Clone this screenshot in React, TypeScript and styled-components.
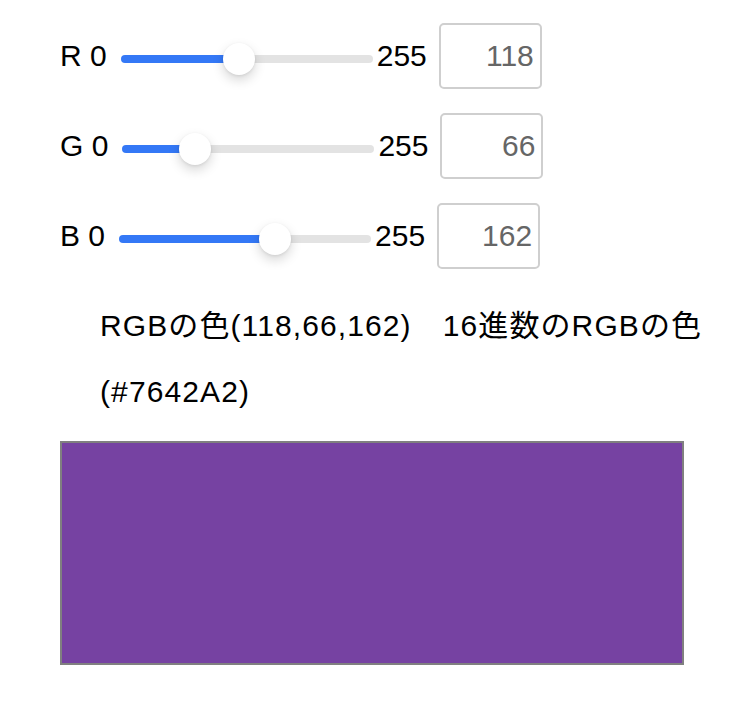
import { useState } from 'react'
import styled, { createGlobalStyle } from 'styled-components'

const GlobalStyle = createGlobalStyle`
  body {
    margin: 0;
    background: #ffffff;
    font-family: "Liberation Sans", "Noto Sans CJK JP", sans-serif;
    color: #000000;
  }
`;

const TRACK_WIDTH = 252
const THUMB = 32

const Page = styled.div`
  padding: 23px 0 0 60px;
`;

const Sliders = styled.div`
  display: flex;
  flex-direction: column;
  gap: 24px;
`;

const Row = styled.div`
  display: flex;
  align-items: center;
  height: 66px;
`;

const Label = styled.span`
  font-size: 30px;
  line-height: 1;
`;

const Range = styled.input`
  -webkit-appearance: none;
  appearance: none;
  width: ${TRACK_WIDTH}px;
  height: ${THUMB}px;
  margin: 6px 4px 0 14px;
  padding: 0;
  background: transparent;
  outline: none;

  &::-webkit-slider-runnable-track {
    height: 8px;
    border-radius: 4px;
    background: linear-gradient(
      to right,
      #3478f6 0,
      #3478f6 var(--fill),
      #e3e3e3 var(--fill),
      #e3e3e3 100%
    );
  }

  &::-webkit-slider-thumb {
    -webkit-appearance: none;
    width: ${THUMB}px;
    height: ${THUMB}px;
    margin-top: -12px;
    border-radius: 50%;
    background: #ffffff;
    box-shadow: 0 5px 12px rgba(0, 0, 0, 0.16), 0 1px 3px rgba(0, 0, 0, 0.08);
  }
`;

const ValueBox = styled.input`
  box-sizing: border-box;
  width: 103px;
  height: 66px;
  margin-left: 12px;
  padding: 0 6px 0 0;
  border: 2px solid #cfcfcf;
  border-radius: 5px;
  font-family: "Liberation Sans", sans-serif;
  font-size: 30px;
  color: #666666;
  text-align: right;
  outline: none;
`;

const Readout = styled.p`
  margin: 24px 0 0;
  padding-left: 40px;
  max-width: 650px;
  font-size: 30px;
  line-height: 66px;
  letter-spacing: 1.1px;
`;

const Swatch = styled.div`
  width: 624px;
  height: 224px;
  margin-top: 16px;
  box-sizing: border-box;
  border: 2px solid #808080;
`;

const hex = (n: number) => n.toString(16).toUpperCase().padStart(2, '0')

const Channel = ({ name, value, onChange }: { name: string; value: number; onChange: (v: number) => void }) => {
  const fill = THUMB / 2 + (value / 255) * (TRACK_WIDTH - THUMB)
  return (
    <Row>
      <Label>{name} 0</Label>
      <Range
        type="range"
        min={0}
        max={255}
        value={value}
        onChange={e => onChange(Number(e.target.value))}
        style={{ ['--fill' as string]: `${fill}px` }}
      />
      <Label>255</Label>
      <ValueBox
        type="text"
        value={value}
        onChange={e => onChange(Math.max(0, Math.min(255, Number(e.target.value) || 0)))}
      />
    </Row>
  )
}

const App = () => {
  const [r, setR] = useState(118)
  const [g, setG] = useState(66)
  const [b, setB] = useState(162)

  const code = `#${hex(r)}${hex(g)}${hex(b)}`

  return (
    <Page>
      <GlobalStyle />
      <Sliders>
        <Channel name="R" value={r} onChange={setR} />
        <Channel name="G" value={g} onChange={setG} />
        <Channel name="B" value={b} onChange={setB} />
      </Sliders>
      <Readout>
        RGBの色({r},{g},{b})　16進数のRGBの色({code})
      </Readout>
      <Swatch style={{ background: `rgb(${r},${g},${b})` }} />
    </Page>
  )
};

export default App;
